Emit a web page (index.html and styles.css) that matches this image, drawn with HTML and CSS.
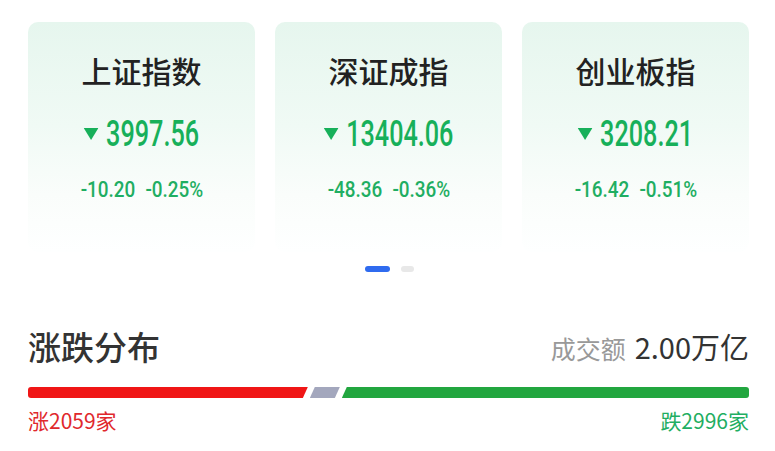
FILE: index.html
```html
<!DOCTYPE html>
<html lang="zh-CN">
<head>
<meta charset="utf-8">
<title>行情</title>
<link rel="stylesheet" href="styles.css">
</head>
<body>
<div class="page">
  <div class="cards">
    <div class="card">
      <div class="card-title">上证指数</div>
      <div class="card-value">
        <svg class="tri" viewBox="0 0 21 12" width="21" height="12"><path d="M0 0 H21 L10.5 12 Z" fill="#17b05a"/></svg>
        <span class="num">3997.56</span>
      </div>
      <div class="card-sub"><span class="chg">-10.20</span><span class="chg">-0.25%</span></div>
    </div>
    <div class="card">
      <div class="card-title">深证成指</div>
      <div class="card-value">
        <svg class="tri" viewBox="0 0 21 12" width="21" height="12"><path d="M0 0 H21 L10.5 12 Z" fill="#17b05a"/></svg>
        <span class="num">13404.06</span>
      </div>
      <div class="card-sub"><span class="chg">-48.36</span><span class="chg">-0.36%</span></div>
    </div>
    <div class="card">
      <div class="card-title">创业板指</div>
      <div class="card-value">
        <svg class="tri" viewBox="0 0 21 12" width="21" height="12"><path d="M0 0 H21 L10.5 12 Z" fill="#17b05a"/></svg>
        <span class="num">3208.21</span>
      </div>
      <div class="card-sub"><span class="chg">-16.42</span><span class="chg">-0.51%</span></div>
    </div>
  </div>
  <div class="dots"><span class="dot active"></span><span class="dot"></span></div>
  <div class="dist-head">
    <div class="dist-title">涨跌分布</div>
    <div class="turnover"><span class="to-label">成交额</span><span class="to-value">2.00万亿</span></div>
  </div>
  <div class="bar">
    <div class="seg up" style="flex: 2059"></div>
    <div class="seg flat"></div>
    <div class="seg down" style="flex: 2996"></div>
  </div>
  <div class="bar-labels">
    <span class="lbl-up">涨2059家</span>
    <span class="lbl-down">跌2996家</span>
  </div>
</div>
</body>
</html>
```

FILE: styles.css
```css
* { box-sizing: border-box; }
html, body { margin: 0; padding: 0; background: #ffffff; }
body {
  font-family: "Noto Sans CJK SC", "Noto Sans", sans-serif;
  color: #333;
}
.page {
  width: 775px;
  height: 451px;
  padding: 22px 26px 0 28px;
  overflow: hidden;
}
.cards {
  display: grid;
  grid-template-columns: repeat(3, 227px);
  column-gap: 20px;
}
.card {
  height: 230px;
  border-radius: 10px;
  background: linear-gradient(180deg, #e6f6ee 0%, #f0faf5 45%, #fafdfb 75%, #feffff 100%);
  display: flex;
  flex-direction: column;
  align-items: center;
  padding-top: 33px;
}
.card-title {
  font-size: 30px;
  line-height: 30px;
  font-weight: 500;
  color: #222;
}
.card-value {
  margin-top: 29px;
  height: 40px;
  display: flex;
  align-items: center;
  justify-content: center;
  gap: 11px;
  transform: scaleX(0.7);
  transform-origin: center center;
}
.tri { display: block; margin-top: 0; }
.num {
  font-family: Roboto, "Liberation Sans", sans-serif;
  font-size: 36px;
  line-height: 40px;
  font-weight: 500;
  color: #17b05a;
  white-space: nowrap;
}
.card-sub {
  margin-top: 23px;
  height: 24px;
  display: flex;
  justify-content: center;
  gap: 12px;
  transform: scaleX(0.84);
  transform-origin: center center;
}
.chg {
  font-family: Roboto, "Liberation Sans", sans-serif;
  font-size: 22.5px;
  line-height: 24px;
  font-weight: 500;
  color: #1fae62;
  white-space: nowrap;
}
.dots {
  margin-top: 14px;
  height: 6px;
  display: flex;
  justify-content: center;
  gap: 11px;
  padding-left: 2px;
}
.dot {
  width: 13px;
  height: 6px;
  border-radius: 3px;
  background: #e8e8e8;
}
.dot.active { width: 25px; background: #2f6bef; }
.dist-head {
  margin-top: 58px;
  display: flex;
  justify-content: space-between;
  align-items: center;
  height: 32px;
}
.dist-title {
  font-size: 33px;
  line-height: 32px;
  color: #333;
  font-weight: 500;
}
.turnover { display: flex; align-items: baseline; gap: 9px; }
.to-label { font-size: 25px; color: #999; }
.to-value { font-size: 29px; color: #333; }
.bar {
  margin-top: 25px;
  height: 11px;
  display: flex;
}
.seg { height: 11px; }
.seg.up {
  background: #f01616;
  border-radius: 3px 0 0 3px;
  clip-path: polygon(0 0, 100% 0, calc(100% - 5px) 100%, 0 100%);
}
.seg.flat {
  width: 30px;
  flex: none;
  background: #a3a7bd;
  clip-path: polygon(calc(100% - 25px) 0, 100% 0, 25px 100%, 0 100%);
  margin-left: 2px;
}
.seg.down {
  background: #22a63f;
  border-radius: 0 3px 3px 0;
  clip-path: polygon(5px 0, 100% 0, 100% 100%, 0 100%);
  margin-left: 2px;
}
.bar-labels {
  margin-top: 12px;
  display: flex;
  justify-content: space-between;
  font-size: 21px;
  line-height: 20px;
}
.lbl-up { color: #e0282c; }
.lbl-down { color: #1fae62; }
```
